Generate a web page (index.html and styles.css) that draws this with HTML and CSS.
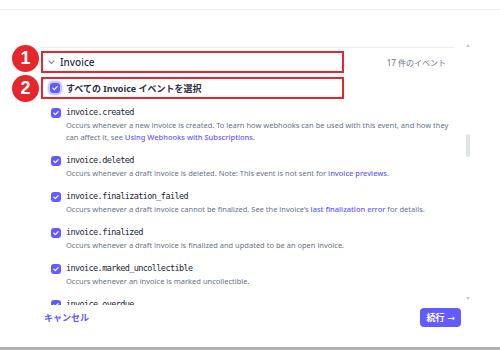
FILE: index.html
```html
<!DOCTYPE html>
<html lang="ja">
	<head>
		<meta charset="UTF-8" />
		<title>Webhook イベントを選択</title>
		<link rel="stylesheet" href="styles.css">
	</head>
	<body>
		<div class="page">
			<div class="topbar"></div>
			<div class="scroll">
				<div class="list">
					<div class="group-head">
						<svg class="chev" width="7" height="5" viewBox="0 0 7 5"><path d="M1 1l2.5 2.5L6 1" fill="none" stroke="#8792a2" stroke-width="1.1" stroke-linecap="round" stroke-linejoin="round"/></svg>
						<span class="group-name">Invoice</span>
						<span class="count">17 件のイベント</span>
					</div>
					<div class="select-all">
						<span class="box focus"><svg width="10" height="10" viewBox="0 0 10 10"><path d="M2.8 5.1l1.5 1.5 2.9-3" fill="none" stroke="#fff" stroke-width="1.3" stroke-linecap="round" stroke-linejoin="round"/></svg></span>
						<span>すべての Invoice イベントを選択</span>
					</div>

					<div class="event">
						<span class="box"><svg width="10" height="10" viewBox="0 0 10 10"><path d="M2.8 5.1l1.5 1.5 2.9-3" fill="none" stroke="#fff" stroke-width="1.3" stroke-linecap="round" stroke-linejoin="round"/></svg></span>
						<code class="event-name">invoice.created</code>
						<p class="desc">Occurs whenever a new invoice is created. To learn how webhooks can be used with this event, and how they can affect it, see <a href="#">Using Webhooks with Subscriptions</a>.</p>
					</div>
					<div class="event">
						<span class="box"><svg width="10" height="10" viewBox="0 0 10 10"><path d="M2.8 5.1l1.5 1.5 2.9-3" fill="none" stroke="#fff" stroke-width="1.3" stroke-linecap="round" stroke-linejoin="round"/></svg></span>
						<code class="event-name">invoice.deleted</code>
						<p class="desc">Occurs whenever a draft invoice is deleted. Note: This event is not sent for <a href="#">invoice previews</a>.</p>
					</div>
					<div class="event">
						<span class="box"><svg width="10" height="10" viewBox="0 0 10 10"><path d="M2.8 5.1l1.5 1.5 2.9-3" fill="none" stroke="#fff" stroke-width="1.3" stroke-linecap="round" stroke-linejoin="round"/></svg></span>
						<code class="event-name">invoice.finalization_failed</code>
						<p class="desc">Occurs whenever a draft invoice cannot be finalized. See the invoice’s <a href="#">last finalization error</a> for details.</p>
					</div>
					<div class="event">
						<span class="box"><svg width="10" height="10" viewBox="0 0 10 10"><path d="M2.8 5.1l1.5 1.5 2.9-3" fill="none" stroke="#fff" stroke-width="1.3" stroke-linecap="round" stroke-linejoin="round"/></svg></span>
						<code class="event-name">invoice.finalized</code>
						<p class="desc">Occurs whenever a draft invoice is finalized and updated to be an open invoice.</p>
					</div>
					<div class="event">
						<span class="box"><svg width="10" height="10" viewBox="0 0 10 10"><path d="M2.8 5.1l1.5 1.5 2.9-3" fill="none" stroke="#fff" stroke-width="1.3" stroke-linecap="round" stroke-linejoin="round"/></svg></span>
						<code class="event-name">invoice.marked_uncollectible</code>
						<p class="desc">Occurs whenever an invoice is marked uncollectible.</p>
					</div>
					<div class="event">
						<span class="box"><svg width="10" height="10" viewBox="0 0 10 10"><path d="M2.8 5.1l1.5 1.5 2.9-3" fill="none" stroke="#fff" stroke-width="1.3" stroke-linecap="round" stroke-linejoin="round"/></svg></span>
						<code class="event-name">invoice.overdue</code>
					</div>
				</div>
				<div class="scrollbar">
					<span class="arrow up"></span>
					<span class="thumb"></span>
					<span class="arrow down"></span>
				</div>
			</div>
			<div class="footer">
				<a href="#" class="cancel">キャンセル</a>
				<button class="next">続行 <span class="next-arrow">→</span></button>
			</div>
			<div class="bottombar"></div>

			<!-- annotation marks -->
			<div class="mark-box mark-box-1"></div>
			<div class="mark-box mark-box-2"></div>
			<div class="mark-num mark-num-1">1</div>
			<div class="mark-num mark-num-2">2</div>
		</div>
	</body>
</html>
```

FILE: styles.css
```css
* {
	margin: 0;
	padding: 0;
	box-sizing: border-box;
}

body {
	font-family: "Noto Sans", "Noto Sans CJK JP", sans-serif;
	background-color: #fff;
	color: #3c4257;
}

.page {
	position: relative;
	width: 500px;
	height: 350px;
	display: flex;
	flex-direction: column;
	overflow: hidden;
}

.topbar {
	height: 10px;
	border-bottom: 1px solid #efeff1;
}

.scroll {
	display: flex;
	margin: 31px 0 0 40px;
	height: 264px;
	overflow: hidden;
}

.list {
	width: 415px;
	margin-top: 6px;
	border-top: 1px solid #ebeef1;
}

.group-head {
	display: flex;
	align-items: center;
	height: 20px;
	margin-top: 4px;
	padding: 0 9px 0 8px;
}

.chev {
	margin-right: 5px;
}

.group-name {
	font-size: 10px;
	font-weight: 500;
	color: #2a2f45;
}

.count {
	margin-left: auto;
	font-size: 8px;
	color: #697386;
}

.select-all {
	display: flex;
	align-items: center;
	gap: 6px;
	height: 20px;
	margin-top: 6px;
	padding-left: 10px;
	font-size: 9px;
	font-weight: 700;
	color: #2a2f45;
}

.box {
	display: flex;
	width: 10px;
	height: 10px;
	border-radius: 3px;
	background-color: #635bff;
}

.box.focus {
	box-shadow: 0 0 0 1px #c9cfff, 0 0 2px 2px #aab6ff;
}

.event {
	display: grid;
	grid-template-columns: 10px 1fr;
	column-gap: 5px;
	align-items: center;
	padding-left: 11px;
	margin-top: 8px;
}

.event + .event {
	margin-top: 11px;
}

.event-name {
	font-family: "DejaVu Sans Mono", monospace;
	font-size: 8.5px;
	letter-spacing: -0.6px;
	line-height: 13px;
	color: #1a1f36;
}

.desc {
	grid-column: 2;
	font-size: 7.5px;
	line-height: 12px;
	color: #697386;
	max-width: 389px;
}

.desc a {
	color: #635bff;
	font-weight: 500;
	text-decoration: none;
}

.scrollbar {
	display: flex;
	flex-direction: column;
	align-items: center;
	width: 8px;
	margin-left: 9px;
}

.arrow {
	width: 0;
	height: 0;
	border-left: 2px solid transparent;
	border-right: 2px solid transparent;
}

.arrow.up {
	margin-top: 3px;
	border-bottom: 3px solid #c4c9d1;
}

.thumb {
	width: 4px;
	height: 23px;
	margin-top: 87px;
	border-radius: 2px;
	background-color: #dfe3ea;
}

.arrow.down {
	margin-top: auto;
	margin-bottom: 5px;
	border-top: 3px solid #c4c9d1;
}

.footer {
	display: flex;
	justify-content: space-between;
	align-items: center;
	padding: 3px 39px 0 44px;
}

.cancel {
	font-size: 9px;
	font-weight: 700;
	line-height: 12px;
	color: #635bff;
	text-decoration: none;
}

.next {
	display: flex;
	align-items: center;
	justify-content: center;
	gap: 3px;
	height: 19px;
	padding: 0 6px;
	border: none;
	border-radius: 4px;
	background-color: #635bff;
	color: #fff;
	font-family: inherit;
	font-size: 9px;
	font-weight: 700;
	line-height: 12px;
}

.next-arrow {
	font-family: "DejaVu Sans", sans-serif;
	font-size: 9px;
	font-weight: 400;
}

.bottombar {
	margin-top: auto;
	height: 3px;
	background-color: #b3b3b3;
}

/* annotation marks over the list */
.mark-box {
	position: absolute;
	left: 41px;
	width: 303px;
	height: 22px;
	border: 2px solid #e5262d;
}

.mark-box-1 {
	top: 51px;
}

.mark-box-2 {
	top: 77px;
}

.mark-num {
	position: absolute;
	left: 12px;
	width: 27px;
	height: 27px;
	border-radius: 50%;
	background-color: #e5262d;
	color: #fff;
	font-family: "Liberation Sans", sans-serif;
	font-size: 18px;
	font-weight: 700;
	line-height: 27px;
	text-align: center;
}

.mark-num-1 {
	top: 45px;
}

.mark-num-2 {
	top: 75px;
}
```
